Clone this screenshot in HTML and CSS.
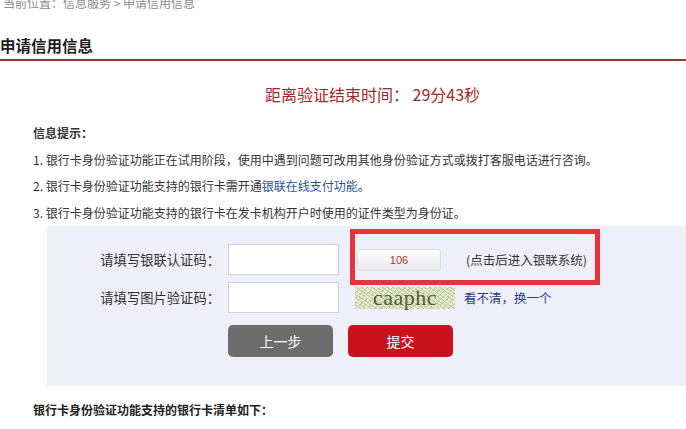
FILE: index.html
```html
<!DOCTYPE html>
<html lang="zh-CN">
<head>
<meta charset="utf-8">
<title>申请信用信息</title>
<link rel="stylesheet" href="styles.css">
</head>
<body>
<div class="page">
  <div class="crumb">当前位置：信息服务 &gt; 申请信用信息</div>
  <h1 class="title">申请信用信息</h1>
  <div class="countdown">距离验证结束时间： 29分43秒</div>
  <div class="tips">
    <div class="tips-head">信息提示：</div>
    <div class="tip">1. 银行卡身份验证功能正在试用阶段，使用中遇到问题可改用其他身份验证方式或拨打客服电话进行咨询。</div>
    <div class="tip">2. 银行卡身份验证功能支持的银行卡需开通<a class="link" href="#">银联在线支付功能</a>。</div>
    <div class="tip">3. 银行卡身份验证功能支持的银行卡在发卡机构开户时使用的证件类型为身份证。</div>
  </div>
  <div class="formbox">
    <div class="row">
      <label class="lbl">请填写银联认证码：</label>
      <input class="inp" type="text">
      <span class="codebtn">106</span>
      <span class="hint">(点击后进入银联系统)</span>
    </div>
    <div class="row">
      <label class="lbl">请填写图片验证码：</label>
      <input class="inp" type="text">
      <span class="captcha"><span class="captcha-txt">caaphc</span></span>
      <a class="refresh" href="#">看不清，换一个</a>
    </div>
    <div class="row btnrow">
      <span class="lbl"></span>
      <button class="btn btn-grey">上一步</button>
      <button class="btn btn-red">提交</button>
    </div>
    <div class="highlight"></div>
  </div>
  <div class="list-head">银行卡身份验证功能支持的银行卡清单如下：</div>
</div>
</body>
</html>
```

FILE: styles.css
```css
html, body {
  margin: 0;
  padding: 0;
  background: #fff;
}
body {
  font-family: "Noto Sans CJK SC", "Noto Sans", sans-serif;
  color: #333;
  overflow: hidden;
}
.page {
  width: 686px;
  height: 429px;
  overflow: hidden;
}
.crumb {
  margin-top: -4px;
  padding-left: 3px;
  font-size: 12px;
  line-height: 14px;
  color: #8a8a8a;
}
.title {
  margin: 24px 0 0 0;
  padding: 0 0 3px 0;
  font-size: 15.5px;
  line-height: 22px;
  font-weight: bold;
  color: #1e1e1e;
  border-bottom: 2px solid #8c3a3e;
}
.countdown {
  margin-top: 22px;
  padding-left: 265px;
  font-size: 16px;
  line-height: 22px;
  color: #a1282b;
}
.tips {
  margin-top: 15px;
  padding-left: 33px;
  font-size: 12px;
  line-height: 26.5px;
  color: #333;
}
.tips-head {
  font-weight: bold;
  font-size: 12px;
}
.link {
  color: #1f5597;
  text-decoration: none;
}
.formbox {
  position: relative;
  margin: 0 0 0 47px;
  padding: 18px 0 29px 0;
  background: #efeffa;
  display: flex;
  flex-direction: column;
  gap: 7px;
}
.row {
  display: flex;
  align-items: center;
  height: 31px;
}
.lbl {
  width: 173px;
  padding-right: 8px;
  text-align: right;
  font-size: 13.3px;
  color: #333;
  flex: none;
}
.inp {
  box-sizing: border-box;
  width: 111px;
  height: 31px;
  margin: 0;
  border: 1px solid #cfd0de;
  background: #fff;
  flex: none;
}
.codebtn {
  box-sizing: border-box;
  margin-left: 18px;
  width: 84px;
  height: 22px;
  line-height: 20px;
  text-align: center;
  font-family: "Liberation Sans", Arial, sans-serif;
  font-size: 11px;
  color: #a53a2c;
  border: 1px solid #dedede;
  border-radius: 3px;
  background: linear-gradient(#ffffff, #e9e9ec);
}
.hint {
  margin-left: 25px;
  font-size: 12.5px;
  color: #333;
}
.captcha {
  margin-left: 16px;
  width: 100px;
  height: 22px;
  display: flex;
  align-items: center;
  justify-content: center;
  background:
    repeating-linear-gradient(35deg, rgba(150,170,110,0.45) 0 1px, transparent 1px 3px),
    repeating-linear-gradient(-40deg, rgba(170,180,120,0.4) 0 1px, transparent 1px 4px),
    #e8ecd0;
}
.captcha-txt {
  font-family: "Liberation Serif", "Times New Roman", serif;
  font-size: 22px;
  line-height: 22px;
  color: #4f5a3c;
  letter-spacing: 0.5px;
}
.refresh {
  margin-left: 9px;
  font-size: 12.5px;
  color: #1f3f86;
  text-decoration: none;
}
.btnrow {
  margin-top: 5px;
  height: 32px;
}
.btn {
  width: 105px;
  height: 32px;
  border: none;
  border-radius: 5px;
  font-family: "Noto Sans CJK SC", sans-serif;
  font-size: 14px;
  color: #fff;
  padding: 0;
  flex: none;
}
.btn-grey {
  background: #6c6c6c;
}
.btn-red {
  margin-left: 15px;
  background: #c9121b;
}
.highlight {
  position: absolute;
  left: 303px;
  top: 3px;
  width: 240px;
  height: 46px;
  border: 5px solid #e5353c;
}
.list-head {
  margin-top: 15px;
  padding-left: 33px;
  font-size: 12px;
  line-height: 18px;
  font-weight: bold;
  color: #222;
}
```
